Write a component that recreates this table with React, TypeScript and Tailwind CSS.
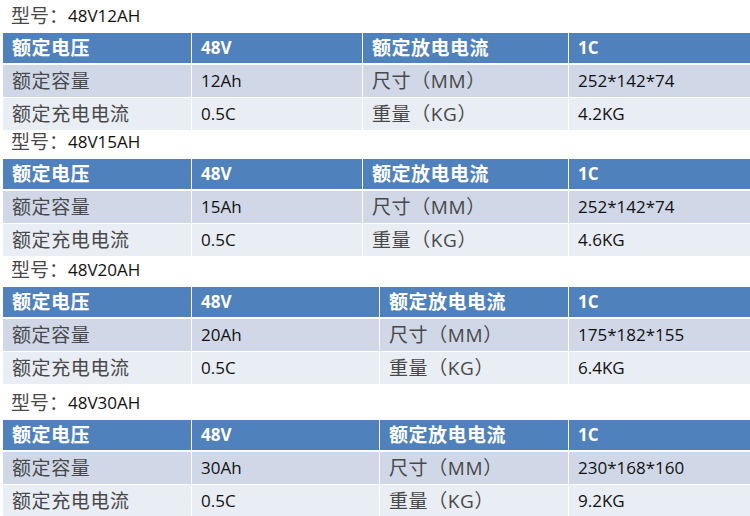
const specs = [
  {
    model: "48V12AH",
    capacity: "12Ah",
    size: "252*142*74",
    weight: "4.2KG",
    titleClass: "h-[33px]",
    cols: "grid-cols-[188px_170px_205px_1fr]",
  },
  {
    model: "48V15AH",
    capacity: "15Ah",
    size: "252*142*74",
    weight: "4.6KG",
    titleClass: "h-[29px]",
    cols: "grid-cols-[188px_170px_205px_1fr]",
  },
  {
    model: "48V20AH",
    capacity: "20Ah",
    size: "175*182*155",
    weight: "6.4KG",
    titleClass: "h-[31px]",
    cols: "grid-cols-[188px_187px_188px_1fr]",
  },
  {
    model: "48V30AH",
    capacity: "30Ah",
    size: "230*168*160",
    weight: "9.2KG",
    titleClass: "h-[36px]",
    cols: "grid-cols-[188px_187px_188px_1fr]",
  },
];

const font = "font-['Open_Sans','Noto_Sans_CJK_SC',sans-serif]";

function Cell({
  children,
  kind,
}: {
  children: React.ReactNode;
  kind: "head-label" | "head-value" | "label" | "value";
}) {
  const styles = {
    "head-label": "text-[19px] font-bold text-white tracking-[0.5px]",
    "head-value": "text-[17px] font-bold text-white",
    label: "text-[19px] text-[#484848] tracking-[0.6px]",
    value: "text-[17px] text-[#111111]",
  };
  return (
    <div className={`flex items-center pl-[9px] whitespace-nowrap ${styles[kind]}`}>
      {children}
    </div>
  );
}

function SpecTable({ spec }: { spec: (typeof specs)[number] }) {
  return (
    <div>
      <div className={`${spec.titleClass} flex items-end pb-[6px] pl-[11px] leading-[22px]`}>
        <span className="text-[19px] text-[#484848]">型号：</span>
        <span className="text-[17px] text-[#111111]">{spec.model}</span>
      </div>
      <div className="ml-[3px] flex flex-col">
        <div className={`grid ${spec.cols} h-[30px] gap-x-px bg-white`}>
          <div className="bg-[#4f81bd] flex">
            <Cell kind="head-label">额定电压</Cell>
          </div>
          <div className="bg-[#4f81bd] flex">
            <Cell kind="head-value">48V</Cell>
          </div>
          <div className="bg-[#4f81bd] flex">
            <Cell kind="head-label">额定放电电流</Cell>
          </div>
          <div className="bg-[#4f81bd] flex">
            <Cell kind="head-value">1C</Cell>
          </div>
        </div>
        <div className={`grid ${spec.cols} mt-[2px] h-[32px] gap-x-px bg-white`}>
          <div className="bg-[#d0d8e8] flex">
            <Cell kind="label">额定容量</Cell>
          </div>
          <div className="bg-[#d0d8e8] flex">
            <Cell kind="value">{spec.capacity}</Cell>
          </div>
          <div className="bg-[#d0d8e8] flex">
            <Cell kind="label">尺寸（MM）</Cell>
          </div>
          <div className="bg-[#d0d8e8] flex">
            <Cell kind="value">{spec.size}</Cell>
          </div>
        </div>
        <div className={`grid ${spec.cols} mt-px h-[32px] gap-x-px bg-white`}>
          <div className="bg-[#e9edf4] flex">
            <Cell kind="label">额定充电电流</Cell>
          </div>
          <div className="bg-[#e9edf4] flex">
            <Cell kind="value">0.5C</Cell>
          </div>
          <div className="bg-[#e9edf4] flex">
            <Cell kind="label">重量（KG）</Cell>
          </div>
          <div className="bg-[#e9edf4] flex">
            <Cell kind="value">{spec.weight}</Cell>
          </div>
        </div>
      </div>
    </div>
  );
}

export default function App() {
  return (
    <div className={`w-[750px] h-[516px] overflow-hidden bg-white ${font}`}>
      {specs.map((spec) => (
        <SpecTable key={spec.model} spec={spec} />
      ))}
    </div>
  );
}
